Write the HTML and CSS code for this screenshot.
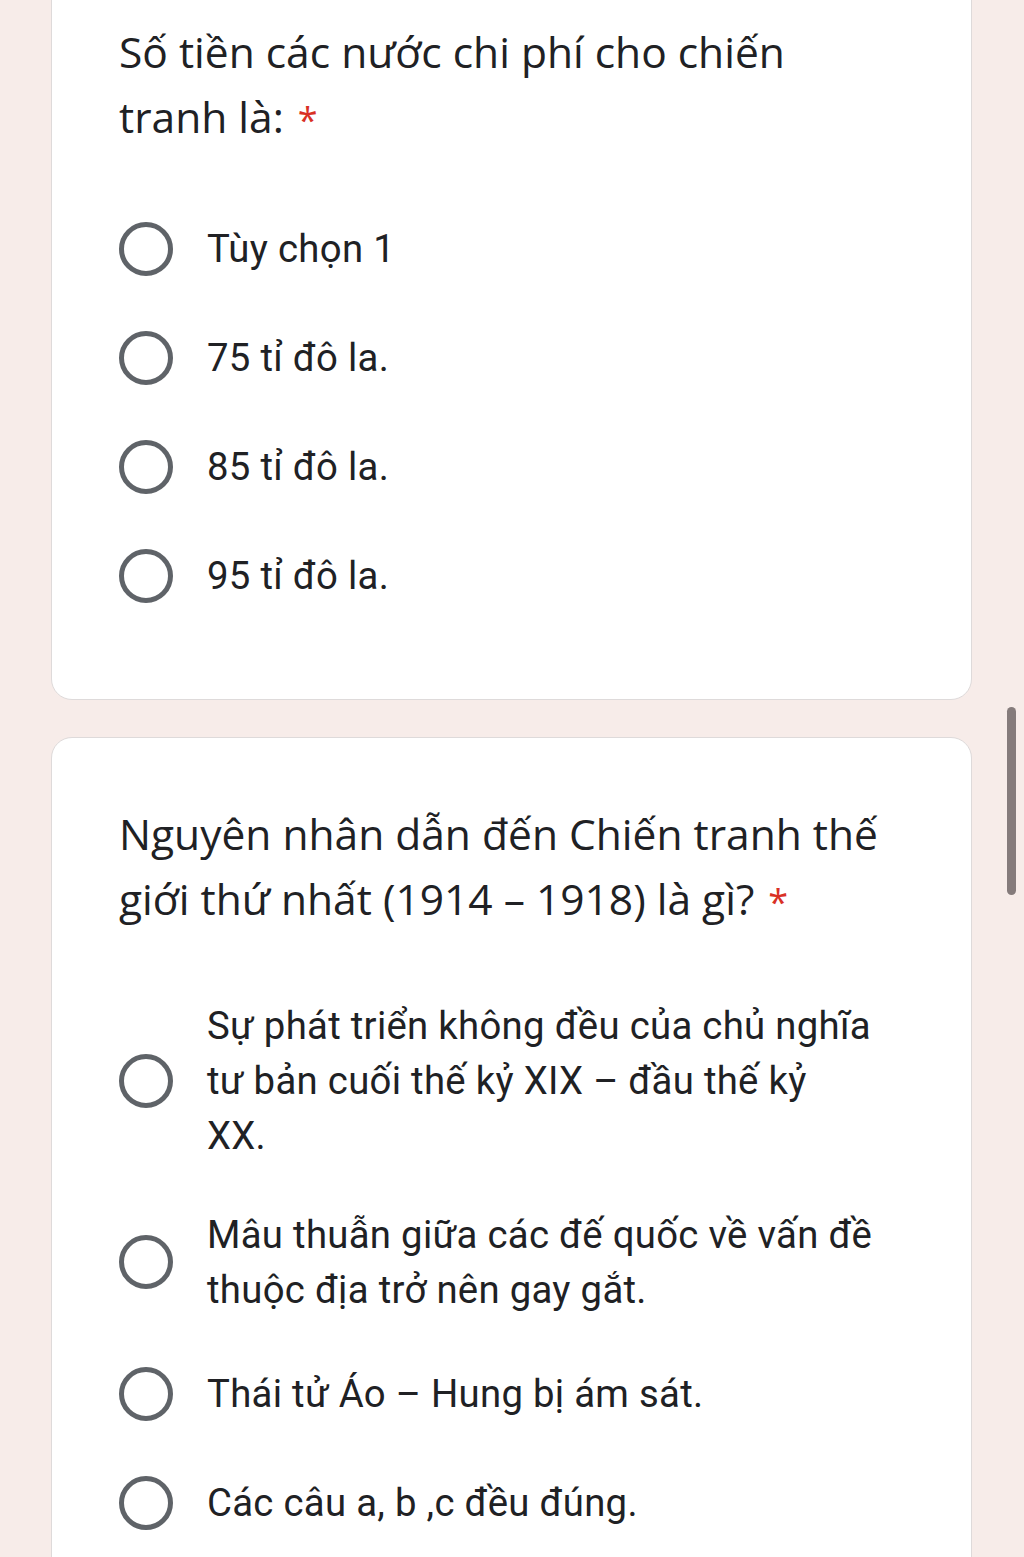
FILE: index.html
```html
<!DOCTYPE html>
<html lang="vi">
<head>
<meta charset="utf-8">
<title>Biểu mẫu</title>
<link rel="stylesheet" href="styles.css">
</head>
<body>
<main class="form">
  <section class="card">
    <h2 class="q-title">Số tiền các nước chi phí cho chiến tranh là:<span class="req">*</span></h2>
    <div class="options">
      <label class="option"><span class="radio"></span><span class="opt-text">Tùy chọn 1</span></label>
      <label class="option"><span class="radio"></span><span class="opt-text">75 tỉ đô la.</span></label>
      <label class="option"><span class="radio"></span><span class="opt-text">85 tỉ đô la.</span></label>
      <label class="option"><span class="radio"></span><span class="opt-text">95 tỉ đô la.</span></label>
    </div>
  </section>
  <section class="card">
    <h2 class="q-title">Nguyên nhân dẫn đến Chiến tranh thế giới thứ nhất (1914 – 1918) là gì?<span class="req">*</span></h2>
    <div class="options">
      <label class="option"><span class="radio"></span><span class="opt-text">Sự phát triển không đều của chủ nghĩa<br>tư bản cuối thế kỷ XIX – đầu thế kỷ<br>XX.</span></label>
      <label class="option"><span class="radio"></span><span class="opt-text">Mâu thuẫn giữa các đế quốc về vấn đề<br>thuộc địa trở nên gay gắt.</span></label>
      <label class="option"><span class="radio"></span><span class="opt-text">Thái tử Áo – Hung bị ám sát.</span></label>
      <label class="option"><span class="radio"></span><span class="opt-text">Các câu a, b ,c đều đúng.</span></label>
    </div>
  </section>
</main>
<div class="scrollbar"></div>
</body>
</html>
```
FILE: styles.css
```css
html, body {
  margin: 0;
  padding: 0;
}
body {
  background: #f7ece9;
  height: 1557px;
  overflow: hidden;
  position: relative;
}
.form {
  margin-top: -45px;
  margin-left: 51px;
  width: 921px;
  display: flex;
  flex-direction: column;
  gap: 37px;
}
.card {
  background: #ffffff;
  border: 1px solid #dedada;
  border-radius: 21px;
  padding: 63px 67px 69px 67px;
}
.q-title {
  margin: 0;
  font-family: "Open Sans", "Noto Sans", sans-serif;
  font-weight: 400;
  font-size: 42.5px;
  line-height: 65px;
  color: #202124;
  width: 760px;
  letter-spacing: 0;
}
.req {
  display: inline-block;
  color: #d93025;
  font-size: 36px;
  line-height: 36px;
  margin-left: 14px;
}
.options {
  margin-top: 45px;
  display: flex;
  flex-direction: column;
}
.option {
  display: flex;
  align-items: center;
  min-height: 109px;
}
.radio {
  flex: none;
  width: 54px;
  height: 54px;
  box-sizing: border-box;
  border: 5.4px solid #5f6368;
  border-radius: 50%;
  margin-right: 34px;
}
.opt-text {
  padding: 22px 0;
  font-family: Roboto, "Noto Sans", sans-serif;
  font-size: 38.3px;
  line-height: 55px;
  letter-spacing: 0.3px;
  color: #202124;
}
.scrollbar {
  position: absolute;
  left: 1007px;
  top: 707px;
  width: 9px;
  height: 188px;
  border-radius: 5px;
  background: #857b7b;
}
```
